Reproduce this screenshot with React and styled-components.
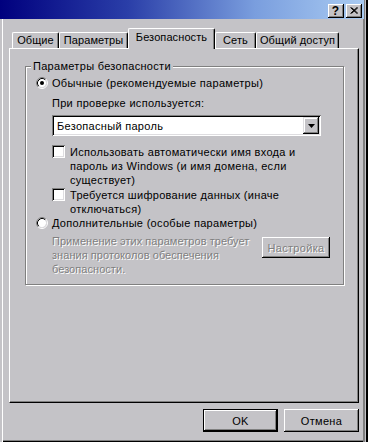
import React from "react";
import styled, { createGlobalStyle } from "styled-components";

const face = "#c4c3c7";

const GlobalStyle = createGlobalStyle`
  html, body {
    margin: 0;
    padding: 0;
    background: ${face};
  }
  body {
    font-family: "Liberation Sans", Arial, sans-serif;
    font-size: 11px;
    letter-spacing: 0.3px;
    color: #000;
  }
`;

const Window = styled.div`
  width: 368px;
  height: 442px;
  box-sizing: border-box;
  background: ${face};
  display: flex;
  flex-direction: column;
  box-shadow: inset 2px 0 0 ${face}, inset 3px 0 0 #fff, inset -1px 0 0 #000,
    inset -2px 0 0 #000, inset -3px 0 0 ${face}, inset -5px 0 0 #808080,
    inset 0 -1px 0 #000, inset 0 -2px 0 #808080;
`;

const TitleBar = styled.div`
  height: 19px;
  width: 364px;
  box-sizing: border-box;
  background: linear-gradient(to right, #00007e 0%, #2a3ea8 35%, #7a9ede 70%, #a9cbf2 100%);
  display: flex;
  justify-content: flex-end;
  align-items: flex-start;
  gap: 2px;
  padding: 4px 2px 0 0;
`;

const CaptionButton = styled.div`
  width: 16px;
  height: 14px;
  box-sizing: border-box;
  background: ${face};
  box-shadow: inset -1px -1px 0 #000, inset 1px 1px 0 #fff, inset -2px -2px 0 #808080;
  display: flex;
  align-items: center;
  justify-content: center;
  font-weight: bold;
  font-size: 12px;
  line-height: 12px;
  letter-spacing: 0;
  padding: 0 1px 1px 0;
`;

const Content = styled.div`
  flex: 1;
  display: flex;
  flex-direction: column;
  padding: 9px 9px 0 9px;
`;

const TabStrip = styled.div`
  display: flex;
  align-items: flex-end;
  height: 20px;
  padding-left: 3px;
  position: relative;
  z-index: 1;
`;

const Tab = styled.div`
  box-sizing: border-box;
  width: ${(p) => p.$w}px;
  height: ${(p) => (p.$active ? 21 : 16)}px;
  margin-bottom: ${(p) => (p.$active ? -1 : 0)}px;
  background: ${face};
  border-top: 1px solid #fff;
  border-left: 1px solid #fff;
  border-right: 1px solid #000;
  box-shadow: inset -1px 0 0 #808080;
  border-radius: 2px 2px 0 0;
  display: flex;
  align-items: center;
  justify-content: center;
  padding-bottom: ${(p) => (p.$active ? 4 : 1)}px;
  letter-spacing: 0.1px;
  white-space: nowrap;
`;

const Panel = styled.div`
  box-sizing: border-box;
  height: 355px;
  border-top: 1px solid #fff;
  border-left: 1px solid #fff;
  border-right: 1px solid #000;
  border-bottom: 1px solid #000;
  box-shadow: inset -1px -1px 0 #808080;
  padding: 10px 0 0 15px;
`;

const Group = styled.fieldset`
  margin: 0;
  width: 319px;
  box-sizing: border-box;
  border: 1px solid #808080;
  box-shadow: 1px 1px 0 #fff, inset 1px 1px 0 #fff;
  padding: 3px 0 8px 0;
  min-inline-size: auto;
`;

const Legend = styled.legend`
  padding: 0 2px;
  margin-left: 5px;
  line-height: 14px;
  background: ${face};
  position: relative;
`;

const OptionRow = styled.div`
  display: flex;
  align-items: flex-start;
  gap: 4px;
  margin: ${(p) => p.$mt || 0}px 0 0 10px;
  line-height: 14px;
  white-space: nowrap;
`;

const Indent = styled.div`
  margin: ${(p) => p.$mt || 0}px 0 0 26px;
  line-height: 14px;
  white-space: nowrap;
`;

const CheckRow = styled.div`
  display: flex;
  align-items: flex-start;
  gap: 5px;
  margin: ${(p) => p.$mt || 0}px 0 0 26px;
  line-height: 14px;
  white-space: nowrap;
`;

const CheckBox = styled.div`
  width: 13px;
  height: 13px;
  box-sizing: border-box;
  flex: none;
  background: #fff;
  box-shadow: inset 1px 1px 0 #808080, inset -1px -1px 0 #fff, inset 2px 2px 0 #000,
    inset -2px -2px 0 #dedde0;
`;

const RadioIcon = styled.svg`
  flex: none;
  margin-top: 1px;
`;

const Select = styled.div`
  width: 269px;
  height: 21px;
  box-sizing: border-box;
  margin: 5px 0 0 26px;
  background: #fff;
  box-shadow: inset 1px 1px 0 #808080, inset -1px -1px 0 #fff, inset 2px 2px 0 #000,
    inset -2px -2px 0 #dedde0;
  display: flex;
  align-items: center;
  padding: 2px 2px 2px 5px;
`;

const SelectText = styled.span`
  flex: 1;
  line-height: 14px;
`;

const ArrowButton = styled.div`
  width: 16px;
  height: 17px;
  box-sizing: border-box;
  background: ${face};
  box-shadow: inset -1px -1px 0 #000, inset 1px 1px 0 #dedde0, inset -2px -2px 0 #808080,
    inset 2px 2px 0 #fff;
  display: flex;
  align-items: center;
  justify-content: center;
`;

const DisabledRow = styled.div`
  display: flex;
  align-items: flex-start;
  margin: 4px 0 0 26px;
`;

const DisabledText = styled.div`
  width: 210px;
  line-height: 14px;
  white-space: nowrap;
  letter-spacing: 0.05px;
  color: #808080;
  text-shadow: 1px 1px 0 #fff;
`;

const Button = styled.div`
  width: ${(p) => p.$w || 75}px;
  height: ${(p) => p.$h || 23}px;
  box-sizing: border-box;
  background: ${face};
  border: ${(p) => (p.$default ? "1px solid #000" : "none")};
  box-shadow: inset -1px -1px 0 #000, inset 1px 1px 0 #fff, inset -2px -2px 0 #808080;
  display: flex;
  align-items: center;
  justify-content: center;
  margin-top: ${(p) => p.$mt || 0}px;
  color: ${(p) => (p.$disabled ? "#808080" : "#000")};
  text-shadow: ${(p) => (p.$disabled ? "1px 1px 0 #fff" : "none")};
`;

const Footer = styled.div`
  display: flex;
  justify-content: flex-end;
  gap: 6px;
  margin-top: 6px;
`;

const Radio = ({ checked }) => (
  <RadioIcon width="12" height="12" viewBox="0 0 12 12">
    <circle cx="6" cy="6" r="4.2" fill="#fff" />
    <path d="M2.11 9.89 A5.5 5.5 0 0 1 9.89 2.11" fill="none" stroke="#808080" />
    <path d="M9.89 2.11 A5.5 5.5 0 0 1 2.11 9.89" fill="none" stroke="#fff" />
    <path d="M2.82 9.18 A4.5 4.5 0 0 1 9.18 2.82" fill="none" stroke="#000" />
    <path d="M9.18 2.82 A4.5 4.5 0 0 1 2.82 9.18" fill="none" stroke="#dedde0" />
    {checked && <circle cx="6" cy="6" r="2" fill="#000" />}
  </RadioIcon>
);

const tabs = [
  { label: "Общие", w: 47 },
  { label: "Параметры", w: 69 },
  { label: "Безопасность", w: 87, active: true },
  { label: "Сеть", w: 41 },
  { label: "Общий доступ", w: 83 },
];

export default function App() {
  return (
    <>
      <GlobalStyle />
      <Window>
        <TitleBar>
          <CaptionButton>?</CaptionButton>
          <CaptionButton>
            <svg width="8" height="7" viewBox="0 0 8 7">
              <path d="M0.5 0.5 L7 6.5 M1.5 0.5 L8 6.5 M7 0.5 L0.5 6.5 M8 0.5 L1.5 6.5" stroke="#000" strokeWidth="1" />
            </svg>
          </CaptionButton>
        </TitleBar>
        <Content>
          <TabStrip>
            {tabs.map((t) => (
              <Tab key={t.label} $w={t.w} $active={t.active}>
                {t.label}
              </Tab>
            ))}
          </TabStrip>
          <Panel>
            <Group>
              <Legend>Параметры безопасности</Legend>
              <OptionRow>
                <Radio checked />
                <span>Обычные (рекомендуемые параметры)</span>
              </OptionRow>
              <Indent $mt={6}>При проверке используется:</Indent>
              <Select>
                <SelectText>Безопасный пароль</SelectText>
                <ArrowButton>
                  <svg width="7" height="4" viewBox="0 0 7 4">
                    <path d="M0 0 H7 L3.5 4 Z" fill="#000" />
                  </svg>
                </ArrowButton>
              </Select>
              <CheckRow $mt={9}>
                <CheckBox />
                <span>
                  Использовать автоматически имя входа и
                  <br />
                  пароль из Windows (и имя домена, если
                  <br />
                  существует)
                </span>
              </CheckRow>
              <CheckRow $mt={1}>
                <CheckBox />
                <span>
                  Требуется шифрование данных (иначе
                  <br />
                  отключаться)
                </span>
              </CheckRow>
              <OptionRow>
                <Radio />
                <span>Дополнительные (особые параметры)</span>
              </OptionRow>
              <DisabledRow>
                <DisabledText>
                  Применение этих параметров требует
                  <br />
                  знания протоколов обеспечения
                  <br />
                  безопасности.
                </DisabledText>
                <Button $w={68} $h={21} $mt={3} $disabled>
                  Настройка
                </Button>
              </DisabledRow>
            </Group>
          </Panel>
          <Footer>
            <Button $default>OK</Button>
            <Button>Отмена</Button>
          </Footer>
        </Content>
      </Window>
    </>
  );
}
